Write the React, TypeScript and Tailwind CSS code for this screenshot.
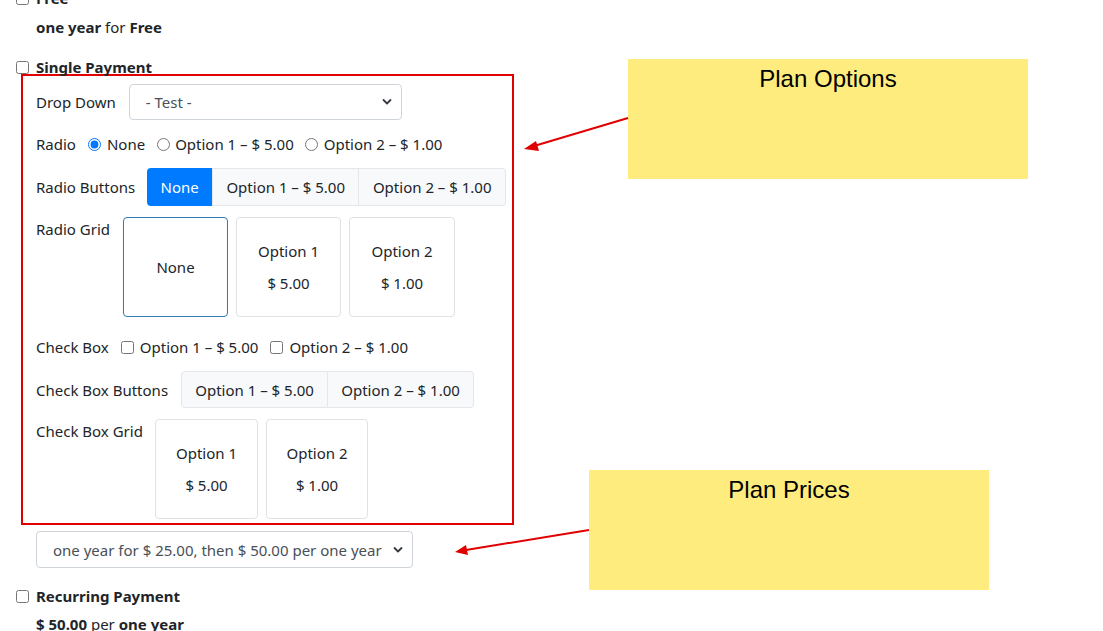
import React from 'react';

const font = { fontFamily: '"Noto Sans", "Open Sans", sans-serif' };

const Chevron: React.FC = () => (
  <svg className="absolute right-[9px] top-1/2 -translate-y-1/2" width="10" height="7" viewBox="0 0 10 7">
    <path d="M1.5 1.5 L5 5 L8.5 1.5" fill="none" stroke="#343a40" strokeWidth="1.8" strokeLinecap="round" strokeLinejoin="round" />
  </svg>
);

const Select: React.FC<{ text: string; className: string }> = ({ text, className }) => (
  <div className={`relative flex items-center rounded-[4px] border border-[#ced4da] bg-white pl-[16px] text-[#495057] ${className}`}>
    <span>{text}</span>
    <Chevron />
  </div>
);

const Box: React.FC<{ checked?: boolean; round?: boolean }> = ({ checked, round }) => (
  <input
    type={round ? 'radio' : 'checkbox'}
    defaultChecked={checked}
    className="m-0 h-[13px] w-[13px] shrink-0 accent-[#0075ff]"
  />
);

const GridCard: React.FC<{ title: string; price?: string; active?: boolean; w: string }> = ({ title, price, active, w }) => (
  <div
    className={`flex h-[100px] flex-col items-center justify-center gap-[8px] rounded-[4px] border bg-white ${w} ${
      active ? 'border-[#2f7cb3]' : 'border-[#dfe2e6]'
    }`}
  >
    <span>{title}</span>
    {price && <span>{price}</span>}
  </div>
);

const App: React.FC = () => {
  return (
    <div className="relative h-[631px] w-[1103px] overflow-hidden bg-white text-[15px] leading-[24px] text-[#212529]" style={font}>
      <div className="-mt-[14px] pl-[16px]">
        <div className="flex items-center gap-[7px]">
          <Box />
          <span className="font-bold">Free</span>
        </div>
        <div className="mt-[5px] pl-[20px]">
          <b>one year</b> for <b>Free</b>
        </div>
        <div className="mt-[16px] flex items-center gap-[7px]">
          <Box />
          <span className="font-bold">Single Payment</span>
        </div>

        <div className="-mt-[5px] ml-[5px] flex w-[493px] flex-col border-2 border-[#e00000] pb-[4px] pl-[13px] pt-[8px]">
          <div className="flex items-center gap-[13px]">
            <span>Drop Down</span>
            <Select text="- Test -" className="h-[36px] w-[273px]" />
          </div>

          <div className="mt-[12px] flex items-center">
            <span className="mr-[12px]">Radio</span>
            <Box round checked />
            <span className="ml-[6px] mr-[12px]">None</span>
            <Box round />
            <span className="ml-[5px] mr-[11px]">Option 1 – $ 5.00</span>
            <Box round />
            <span className="ml-[6px]">Option 2 – $ 1.00</span>
          </div>

          <div className="mt-[12px] flex items-center gap-[12px]">
            <span>Radio Buttons</span>
            <div className="flex h-[38px]">
              <div className="flex w-[65px] items-center justify-center rounded-l-[4px] bg-[#007bff] text-white">None</div>
              <div className="flex w-[147px] items-center justify-center border border-[#e3e6ea] bg-[#f8f9fa]">Option 1 – $ 5.00</div>
              <div className="flex w-[147px] items-center justify-center rounded-r-[4px] border border-l-0 border-[#e3e6ea] bg-[#f8f9fa]">Option 2 – $ 1.00</div>
            </div>
          </div>

          <div className="mt-[11px] flex items-start">
            <span className="w-[87px]">Radio Grid</span>
            <div className="flex gap-[8px]">
              <GridCard title="None" active w="w-[105px]" />
              <GridCard title="Option 1" price="$ 5.00" w="w-[105px]" />
              <GridCard title="Option 2" price="$ 1.00" w="w-[106px]" />
            </div>
          </div>

          <div className="mt-[18px] flex items-center">
            <span className="mr-[12px]">Check Box</span>
            <Box />
            <span className="ml-[6px] mr-[12px]">Option 1 – $ 5.00</span>
            <Box />
            <span className="ml-[6px]">Option 2 – $ 1.00</span>
          </div>

          <div className="mt-[12px] flex items-center gap-[13px]">
            <span>Check Box Buttons</span>
            <div className="flex h-[37px]">
              <div className="flex w-[147px] items-center justify-center rounded-l-[4px] border border-[#e3e6ea] bg-[#f8f9fa]">Option 1 – $ 5.00</div>
              <div className="flex w-[146px] items-center justify-center rounded-r-[4px] border border-l-0 border-[#e3e6ea] bg-[#f8f9fa]">Option 2 – $ 1.00</div>
            </div>
          </div>

          <div className="mt-[11px] flex items-start">
            <span className="w-[119px]">Check Box Grid</span>
            <div className="flex gap-[8px]">
              <GridCard title="Option 1" price="$ 5.00" w="w-[103px]" />
              <GridCard title="Option 2" price="$ 1.00" w="w-[102px]" />
            </div>
          </div>
        </div>

        <div className="mt-[6px] pl-[20px]">
          <Select text="one year for $ 25.00, then $ 50.00 per one year" className="h-[37px] w-[377px]" />
        </div>

        <div className="mt-[16px] flex items-center gap-[7px]">
          <Box />
          <span className="font-bold">Recurring Payment</span>
        </div>
        <div className="mt-[4px] pl-[20px]">
          <b>$ 50.00</b> per <b>one year</b>
        </div>
      </div>

      {/* annotations */}
      <div
        className="absolute left-[628px] top-[59px] flex h-[120px] w-[400px] justify-center bg-[#ffec7e] pt-[5px] text-[24px] leading-[30px] text-black"
        style={{ fontFamily: '"Liberation Sans", Arial, sans-serif' }}
      >
        Plan Options
      </div>
      <div
        className="absolute left-[589px] top-[470px] flex h-[120px] w-[400px] justify-center bg-[#ffec7e] pt-[5px] text-[24px] leading-[30px] text-black"
        style={{ fontFamily: '"Liberation Sans", Arial, sans-serif' }}
      >
        Plan Prices
      </div>
      <svg className="pointer-events-none absolute left-0 top-0" width="1103" height="631">
        <line x1="628" y1="118" x2="534" y2="146" stroke="#e00000" strokeWidth="2" />
        <polygon points="524,149 536,141 539,151" fill="#e00000" />
        <line x1="589" y1="530" x2="466" y2="550" stroke="#e00000" strokeWidth="2" />
        <polygon points="455,552 466,545 468,555" fill="#e00000" />
      </svg>
    </div>
  );
};

export default App;
